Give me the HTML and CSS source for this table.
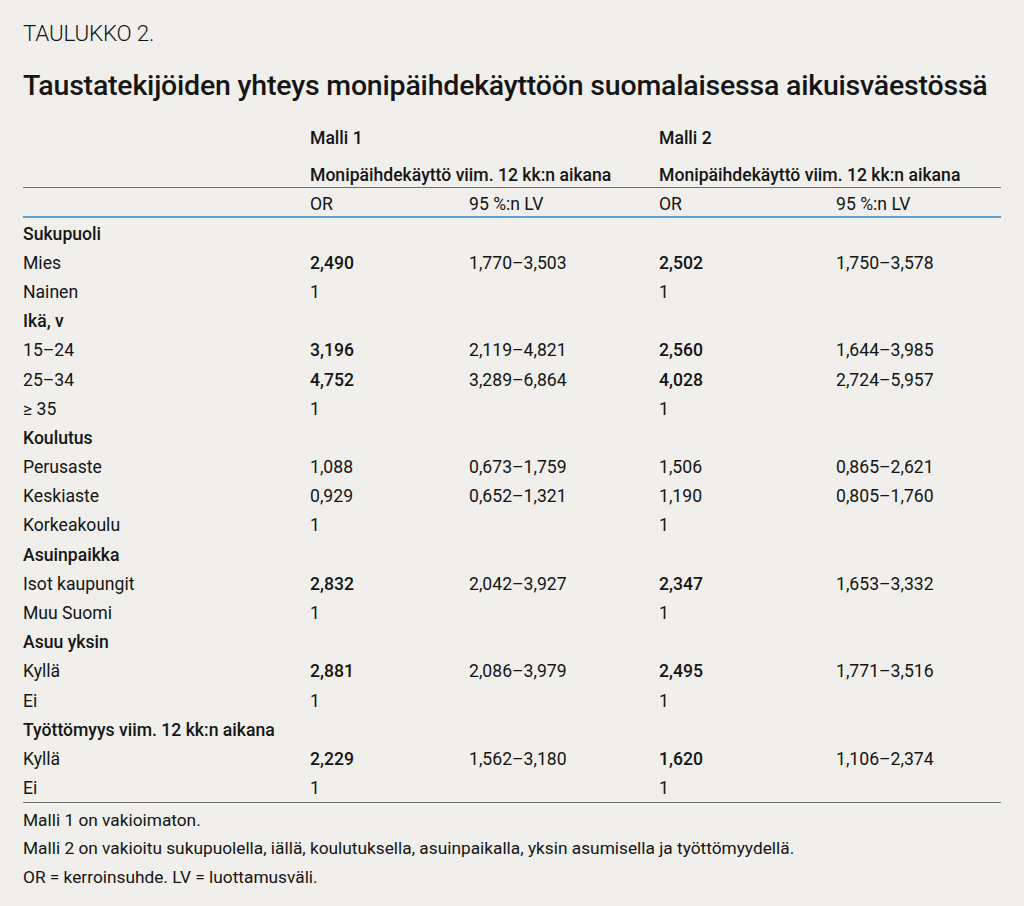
FILE: index.html
```html
<!DOCTYPE html>
<html lang="fi">
<head>
<meta charset="utf-8">
<title>Taulukko 2</title>
<link rel="stylesheet" href="styles.css">
</head>
<body>
<div class="page">
  <div class="label">TAULUKKO 2.</div>
  <h1 class="title">Taustatekijöiden yhteys monipäihdekäyttöön suomalaisessa aikuisväestössä</h1>
  <table class="data">
    <colgroup>
      <col class="c-label"><col class="c-or"><col class="c-lv"><col class="c-or2"><col class="c-lv2">
    </colgroup>
    <thead>
      <tr class="h-model"><th></th><th colspan="2">Malli 1</th><th colspan="2">Malli 2</th></tr>
      <tr class="h-sub"><th></th><th colspan="2">Monipäihdekäyttö viim. 12 kk:n aikana</th><th colspan="2">Monipäihdekäyttö viim. 12 kk:n aikana</th></tr>
      <tr class="h-cols"><th></th><th>OR</th><th>95 %:n LV</th><th>OR</th><th>95 %:n LV</th></tr>
    </thead>
    <tbody>
      <tr class="group"><td>Sukupuoli</td><td></td><td></td><td></td><td></td></tr>
      <tr><td>Mies</td><td class="b">2,490</td><td>1,770–3,503</td><td class="b">2,502</td><td>1,750–3,578</td></tr>
      <tr><td>Nainen</td><td>1</td><td></td><td>1</td><td></td></tr>
      <tr class="group"><td>Ikä, v</td><td></td><td></td><td></td><td></td></tr>
      <tr><td>15–24</td><td class="b">3,196</td><td>2,119–4,821</td><td class="b">2,560</td><td>1,644–3,985</td></tr>
      <tr><td>25–34</td><td class="b">4,752</td><td>3,289–6,864</td><td class="b">4,028</td><td>2,724–5,957</td></tr>
      <tr><td>≥ 35</td><td>1</td><td></td><td>1</td><td></td></tr>
      <tr class="group"><td>Koulutus</td><td></td><td></td><td></td><td></td></tr>
      <tr><td>Perusaste</td><td>1,088</td><td>0,673–1,759</td><td>1,506</td><td>0,865–2,621</td></tr>
      <tr><td>Keskiaste</td><td>0,929</td><td>0,652–1,321</td><td>1,190</td><td>0,805–1,760</td></tr>
      <tr><td>Korkeakoulu</td><td>1</td><td></td><td>1</td><td></td></tr>
      <tr class="group"><td>Asuinpaikka</td><td></td><td></td><td></td><td></td></tr>
      <tr><td>Isot kaupungit</td><td class="b">2,832</td><td>2,042–3,927</td><td class="b">2,347</td><td>1,653–3,332</td></tr>
      <tr><td>Muu Suomi</td><td>1</td><td></td><td>1</td><td></td></tr>
      <tr class="group"><td>Asuu yksin</td><td></td><td></td><td></td><td></td></tr>
      <tr><td>Kyllä</td><td class="b">2,881</td><td>2,086–3,979</td><td class="b">2,495</td><td>1,771–3,516</td></tr>
      <tr><td>Ei</td><td>1</td><td></td><td>1</td><td></td></tr>
      <tr class="group"><td>Työttömyys viim. 12 kk:n aikana</td><td></td><td></td><td></td><td></td></tr>
      <tr><td>Kyllä</td><td class="b">2,229</td><td>1,562–3,180</td><td class="b">1,620</td><td>1,106–2,374</td></tr>
      <tr class="last"><td>Ei</td><td>1</td><td></td><td>1</td><td></td></tr>
    </tbody>
  </table>
  <div class="notes">
    <p>Malli 1 on vakioimaton.</p>
    <p>Malli 2 on vakioitu sukupuolella, iällä, koulutuksella, asuinpaikalla, yksin asumisella ja työttömyydellä.</p>
    <p>OR = kerroinsuhde. LV = luottamusväli.</p>
  </div>
</div>
</body>
</html>
```
FILE: styles.css
```css
html, body {
  margin: 0;
  padding: 0;
  background: #f0efeb;
}
body {
  font-family: Roboto, "Noto Sans", sans-serif;
  color: #151515;
}
.page {
  padding: 20px 23px 0 23px;
  width: 978px;
}
.label {
  font-size: 22.4px;
  font-weight: 300;
  line-height: 26px;
  letter-spacing: -0.2px;
}
.title {
  margin: 24px 0 0 0;
  font-size: 28.5px;
  font-weight: 500;
  line-height: 32px;
  letter-spacing: -0.2px;
}
.data {
  margin-top: 18px;
  width: 978px;
  border-collapse: separate;
  border-spacing: 0;
  table-layout: fixed;
  font-size: 17.6px;
}
.c-label { width: 287px; }
.c-or { width: 159px; }
.c-lv { width: 190px; }
.c-or2 { width: 177px; }
.c-lv2 { width: 165px; }
th, td {
  padding: 0;
  text-align: left;
  white-space: nowrap;
  box-sizing: border-box;
}
th {
  font-weight: 500;
  line-height: 20px;
}
.h-model th {
  height: 36px;
  vertical-align: middle;
}
.h-sub th {
  height: 32px;
  vertical-align: bottom;
  padding-bottom: 2px;
  border-bottom: 1px solid #6f6f6f;
}
.h-cols th {
  font-weight: 400;
  height: 30px;
  vertical-align: bottom;
  padding-bottom: 2px;
  border-bottom: 2px solid #5a9fd6;
}
tbody td {
  height: 29.2px;
  line-height: 20px;
  padding-top: 2px;
  vertical-align: middle;
  font-weight: 400;
}
tbody tr.last td {
  height: 30.2px;
  border-bottom: 1px solid #6f6f6f;
}
.group td {
  font-weight: 500;
}
td.b {
  font-weight: 500;
}
.notes {
  font-size: 17.3px;
  font-weight: 400;
}
.notes p {
  margin: 0;
  line-height: 28.7px;
}
.notes p:first-child {
  margin-top: 3px;
}
```
